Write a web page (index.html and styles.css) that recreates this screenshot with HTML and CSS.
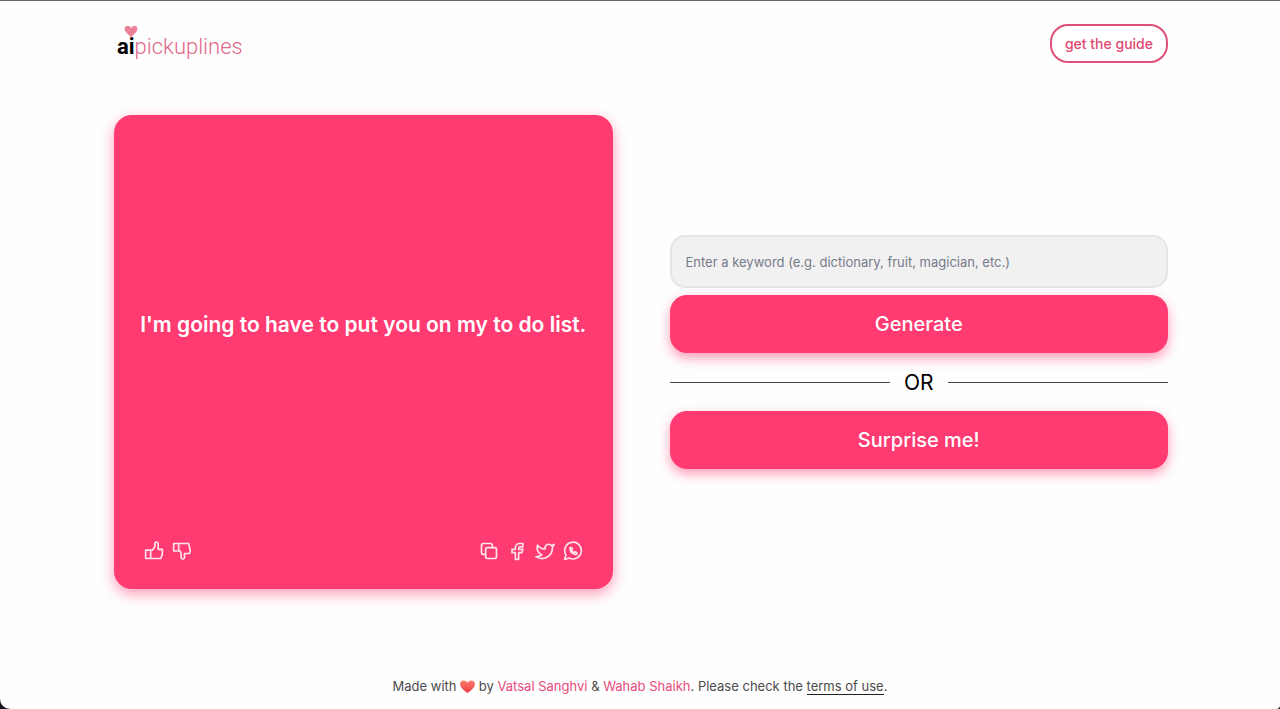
FILE: index.html
```html
<!DOCTYPE html>
<html lang="en">
<head>
    <meta charset="UTF-8">
    <meta name="viewport" content="width=device-width, initial-scale=1.0">
    <title>aipickuplines</title>
    <link rel="stylesheet" href="styles.css">
</head>
<body>
    <header class="header">
        <a class="logo" href="#">
            <svg class="logo-heart" viewBox="0 0 14 13" aria-hidden="true">
                <path d="M7 12.500C4 9 .5 7 .5 4C.5 .5 5 -.5 7 3C9 -.5 13.500 .5 13.500 4C13.500 7 10 9 7 12.500Z" fill="#ee8a9d"/>
                <path d="M2 4L5 2M2 6L6 3M4 8L11 2M5 9L12 4M7 10L12 6" stroke="#d9647c" stroke-width=".6"/>
            </svg>
            <span class="logo-text"><b>ai</b>pickuplines</span>
        </a>
        <button class="guide-btn" type="button">get the guide</button>
    </header>
    <main class="main">
        <section class="card">
            <p class="line">I'm going to have to put you on my to do list.</p>
            <div class="actions">
                <div class="icons">
                    <button class="icon-btn" type="button" aria-label="Like">
                        <svg viewBox="0 0 24 24"><path d="M2 11h6v10H2zM8 11h2l3-4V3a2 2 0 0 1 4 1v6h5v6l-2 5H8"/></svg>
                    </button>
                    <button class="icon-btn" type="button" aria-label="Dislike">
                        <svg viewBox="0 0 24 24"><path d="M2 3h6v9H2zM8 12h2l1 4v3a2 2 0 0 0 4 1v-5h6l1-3-2-9H8"/></svg>
                    </button>
                </div>
                <div class="icons">
                    <button class="icon-btn" type="button" aria-label="Copy">
                        <svg viewBox="0 0 24 24"><rect x="8" y="8" width="13" height="13" rx="2"/><path d="M16 8V5a2 2 0 0 0-2-2H5a2 2 0 0 0-2 2v9a2 2 0 0 0 2 2h3"/></svg>
                    </button>
                    <button class="icon-btn" type="button" aria-label="Share on Facebook">
                        <svg viewBox="0 0 24 24"><path d="M6 10v4h4v8h4v-8h4l1-4h-5V8a1 1 0 0 1 1-1h4V3h-4a5 5 0 0 0-5 5v2z"/></svg>
                    </button>
                    <button class="icon-btn" type="button" aria-label="Share on Twitter">
                        <svg viewBox="0 0 24 24"><path d="M23 4c-1 .7-2 1.100-3.100 1.500a4.500 4.500 0 0 0-7.900 3v1C8 9.500 5 8 3 5c-1 4 0 9 5 11.500-2 1.500-4 2.500-7 2.500 9 5 20 0 20-11.500a4.500 4.500 0 0 0-.1-.8A7.700 7.700 0 0 0 23 4z"/></svg>
                    </button>
                    <button class="icon-btn" type="button" aria-label="Share on WhatsApp">
                        <svg viewBox="0 0 24 24"><path d="M2 22l1.500-5.300a10 10 0 1 1 4 3.700z"/><path d="M8.500 8v1.500a6.500 6.500 0 0 0 6.500 6.500h1.500v-2l-2-1-1.200 1a5.500 5.500 0 0 1-3-3l1-1.200-1-2z"/></svg>
                    </button>
                </div>
            </div>
        </section>
        <form class="controls">
            <input class="keyword" type="text" aria-label="Keyword" placeholder="Enter a keyword (e.g. dictionary, fruit, magician, etc.)">
            <button class="btn" type="button">Generate</button>
            <div class="divider">OR</div>
            <button class="btn" type="button">Surprise me!</button>
        </form>
    </main>
    <footer class="footer">
        Made with
        <svg class="heart" viewBox="0 0 16 14" role="img" aria-label="love">
            <defs>
                <linearGradient id="heartFill" x1="0" y1="0" x2="0" y2="1">
                    <stop offset="0" stop-color="#ff7d70"/>
                    <stop offset="1" stop-color="#e8393f"/>
                </linearGradient>
            </defs>
            <path d="M8 14C4 11 0 8 0 4C0 0 6-1 8 3C10-1 16 0 16 4C16 8 12 11 8 14Z" fill="url(#heartFill)"/>
        </svg>
        by <a href="#">Vatsal Sanghvi</a> &amp; <a href="#">Wahab Shaikh</a>. Please check the <a class="terms" href="#">terms of use</a>.
    </footer>
</body>
</html>
```
FILE: styles.css
```css
* {
    box-sizing: border-box;
}
html {
    background: #17151f;
}
body {
    margin: 0;
    min-height: 100vh;
    display: flex;
    flex-direction: column;
    background: #fefefe;
    border-top: 1px solid #6b6b6b;
    border-radius: 0 0 4px 10px;
    font-family: Inter, "Liberation Sans", sans-serif;
    color: #000;
}
button,
input {
    font-family: inherit;
}
.header {
    display: flex;
    justify-content: space-between;
    align-items: center;
    padding: 23px 112px 0 117px;
}
.logo {
    position: relative;
    color: #e0688a;
    text-decoration: none;
}
.logo-heart {
    position: absolute;
    top: -2px;
    left: 7px;
    width: 14px;
    height: 13px;
}
.logo-text {
    display: block;
    padding-top: 6px;
    font-family: Roboto, sans-serif;
    font-size: 22px;
    line-height: 28px;
    font-weight: 300;
}
.logo-text b {
    color: #000;
    font-weight: 700;
}
.guide-btn {
    height: 39px;
    padding: 0 13px;
    border: 2px solid #df5078;
    border-radius: 18px;
    background: #fff;
    color: #df4872;
    font-size: 14px;
    font-weight: 500;
    cursor: pointer;
}
.main {
    flex: 1;
    display: grid;
    grid-template-columns: 1fr 1fr;
    gap: 57px;
    align-items: center;
    padding: 0 112px 34px 114px;
}
.card {
    aspect-ratio: 20 / 19;
    display: flex;
    flex-direction: column;
    padding: 28px 30px;
    border-radius: 18px;
    background: #ff3b72;
    color: #fff;
    box-shadow: 0 5px 14px rgba(255, 59, 114, 0.5);
}
.line {
    flex: 1;
    display: flex;
    align-items: center;
    justify-content: center;
    margin: 0 -8px;
    padding-bottom: 34px;
    font-size: 21px;
    line-height: 30px;
    font-weight: 600;
    text-align: center;
}
.actions,
.icons {
    display: flex;
    justify-content: space-between;
}
.icons {
    gap: 8px;
}
.icon-btn {
    width: 20px;
    height: 20px;
    padding: 0;
    border: none;
    background: none;
    cursor: pointer;
}
.icon-btn svg {
    display: block;
    width: 20px;
    height: 20px;
    fill: none;
    stroke: #ffe3ec;
    stroke-width: 2;
    stroke-linecap: round;
    stroke-linejoin: round;
}
.controls {
    display: flex;
    flex-direction: column;
}
.keyword {
    width: 100%;
    height: 53px;
    margin-bottom: 7px;
    padding: 0 14px;
    border: 2px solid #e5e5e5;
    border-radius: 15px;
    background: #f1f1f1;
    font-size: 13px;
}
.keyword::placeholder {
    color: #757b89;
    opacity: 1;
}
.btn {
    height: 58px;
    border: none;
    border-radius: 17px;
    background: #ff3b72;
    color: #fff;
    font-size: 20px;
    font-weight: 500;
    box-shadow: 0 5px 12px rgba(255, 59, 114, 0.5);
    cursor: pointer;
}
.divider {
    display: flex;
    align-items: center;
    gap: 14px;
    height: 58px;
    font-size: 21px;
}
.divider::before,
.divider::after {
    content: "";
    flex: 1;
    height: 1px;
    background: #444;
}
.footer {
    padding: 0 20px 12px;
    font-size: 13px;
    line-height: 22px;
    text-align: center;
    color: #4b4b4b;
}
.footer a {
    color: #e94b7b;
    text-decoration: none;
}
.footer .terms {
    color: #4b4b4b;
    border-bottom: 1px solid #222;
}
.heart {
    width: 15px;
    height: 13px;
    vertical-align: -2px;
}
```
